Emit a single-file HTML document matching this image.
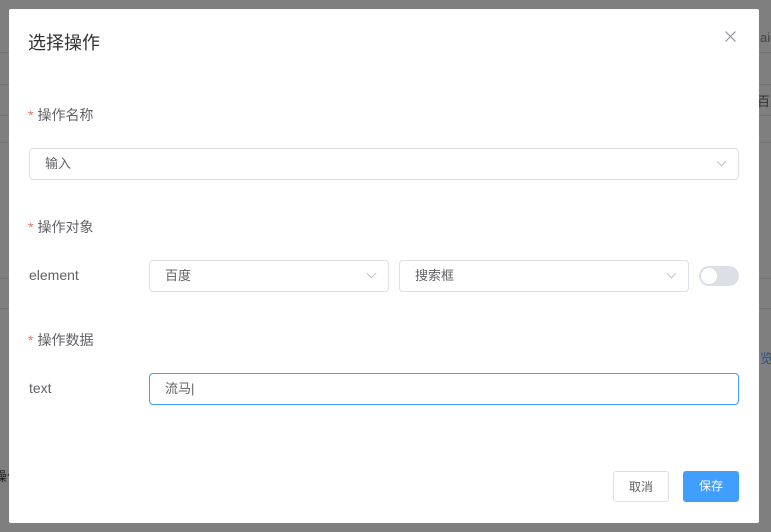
<!DOCTYPE html>
<html><head><meta charset="utf-8"><style>
body{margin:0;width:771px;height:532px;background:#7f7f7f;position:relative;overflow:hidden;font-family:"Liberation Sans","Noto Sans CJK SC",sans-serif;}
.line{position:absolute;left:0;width:771px;height:1px;background:#737373}
.dlg{position:absolute;left:9px;top:9px;width:750px;height:514px;background:#fff;border-radius:2px}
.a{position:absolute;white-space:nowrap}
.t{font-size:18px;color:#303133}
.lab{font-size:14px;color:#606266}
.lab b{color:#f56c6c;font-weight:normal;margin-right:4px}
.inp{position:absolute;border:1px solid #dcdfe6;border-radius:4px;height:30px;box-sizing:border-box;font-size:13px;color:#606266;line-height:28px;padding-left:15px}
.arr{position:absolute;right:13px;top:9px;width:6px;height:6px;border-right:1px solid #c0c4cc;border-bottom:1px solid #c0c4cc;transform:rotate(45deg)}
.btn{position:absolute;height:31px;border-radius:3px;font-size:12px;text-align:center;line-height:31px;box-sizing:border-box}
</style></head><body>
<div class="line" style="top:52px"></div><div class="line" style="top:84px"></div><div class="line" style="top:115px"></div><div class="line" style="top:142px"></div><div class="line" style="top:278px"></div><div class="line" style="top:308px"></div>
<div class="a" style="left:760px;top:30px;font-size:13px;color:#444">aid</div>
<div class="a" style="left:757px;top:91px;font-size:13px;color:#333">百度</div>
<div class="a" style="left:760px;top:348px;font-size:13px;color:#2a4f8a">览</div>
<div class="a" style="left:-6px;top:466px;font-size:13px;color:#222">操作</div>
<div class="dlg">
<div class="a t" style="left:19px;top:20px">选择操作</div>
<svg class="a" style="left:716px;top:22px" width="11" height="11" viewBox="0 0 11 11"><path d="M0.5 0.5L10.5 10.5M10.5 0.5L0.5 10.5" stroke="#909399" stroke-width="1.2"/></svg>
<div class="a lab" style="left:19px;top:96px"><b>*</b>操作名称</div>
<div class="inp" style="left:20px;top:139px;width:710px;height:32px;line-height:30px">输入<span class="arr"></span></div>
<div class="a lab" style="left:19px;top:208px"><b>*</b>操作对象</div>
<div class="a lab" style="left:20px;top:258px">element</div>
<div class="inp" style="left:140px;top:251px;width:240px;height:32px;line-height:30px">百度<span class="arr"></span></div>
<div class="inp" style="left:390px;top:251px;width:290px;height:32px;line-height:30px">搜索框<span class="arr"></span></div>
<div class="a" style="left:690px;top:257px;width:40px;height:20px;border-radius:10px;background:#dcdfe6"><div class="a" style="left:2px;top:2px;width:16px;height:16px;border-radius:50%;background:#fff"></div></div>
<div class="a lab" style="left:19px;top:321px"><b>*</b>操作数据</div>
<div class="a lab" style="left:20px;top:371px">text</div>
<div class="inp" style="left:140px;top:364px;width:590px;height:32px;line-height:30px;border-color:#409eff">流马|</div>
<div class="btn" style="left:604px;top:462px;width:56px;border:1px solid #dcdfe6;color:#606266">取消</div>
<div class="btn" style="left:674px;top:462px;width:56px;background:#409eff;color:#fff">保存</div>
</div>
</body></html>
